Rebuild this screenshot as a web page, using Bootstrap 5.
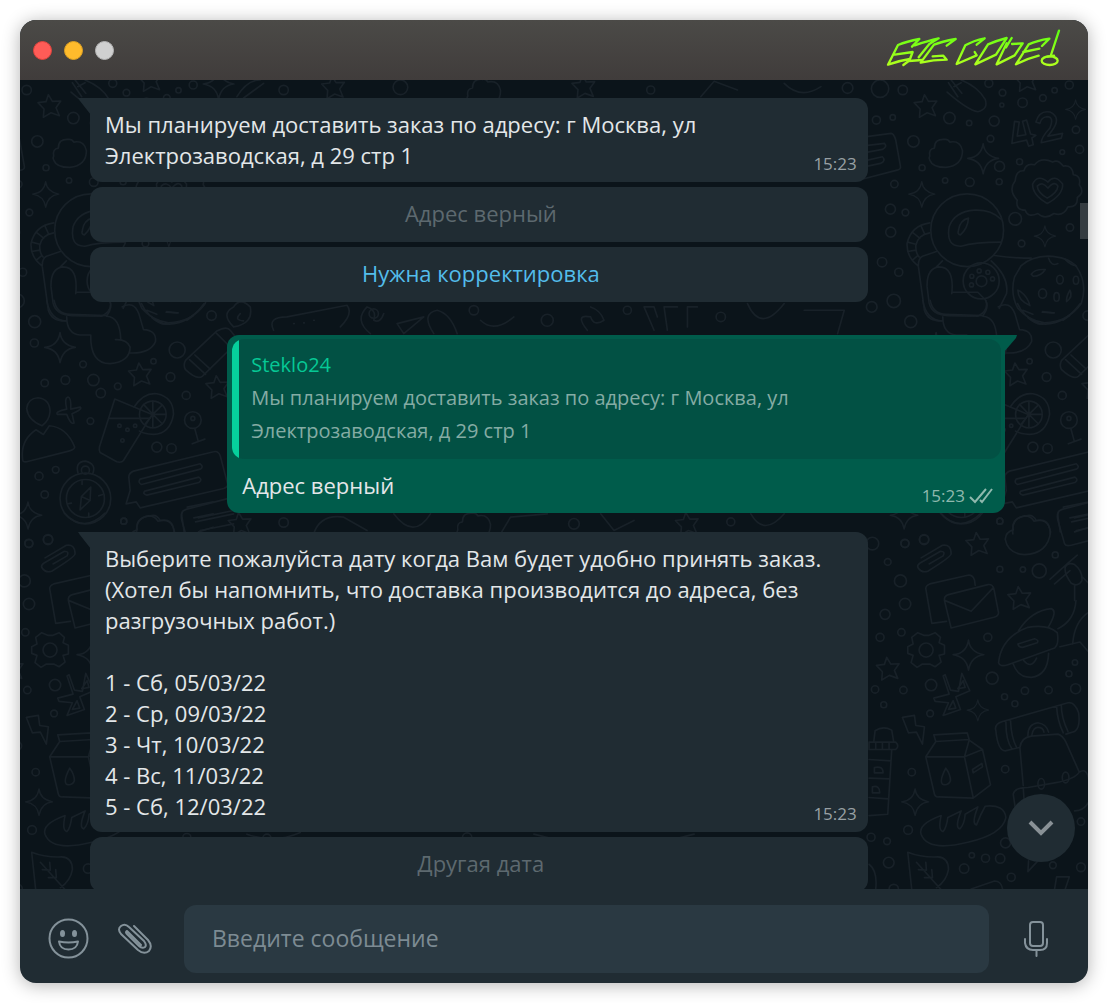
<!DOCTYPE html>
<html lang="ru">
<head>
<meta charset="utf-8">
<meta name="viewport" content="width=device-width, initial-scale=1">
<title>Steklo24</title>
<link href="https://cdn.jsdelivr.net/npm/bootstrap@5.3.0/dist/css/bootstrap.min.css" rel="stylesheet">
<style>
body{background:#fff;font-family:"Open Sans","Noto Sans",sans-serif;font-size:22px;line-height:31px;color:#e3e7e9}
.page{height:100vh;padding:20px}
.win{border-radius:16px;box-shadow:0 2px 18px rgba(0,0,0,.3);background:#202c33}
.titlebar{height:60px;padding:0 26px 0 13px;background:linear-gradient(#4b4a47,#403c3b)}
.lights{gap:12px}
.dot{width:19px;height:19px;border-radius:50%;border:1px solid}
.dot-r{background:#ff5c57;border-color:#e0443e}
.dot-y{background:#ffbb2c;border-color:#dea123}
.dot-g{background:#d0d0d0;border-color:#b5b5b5}
.chat{background:#0b141a;min-height:0}
.doodles{position:absolute;top:0;left:0;width:100%;height:100%;fill:none;stroke:#182128;stroke-width:5;stroke-linecap:round;stroke-linejoin:round}
.feed{position:relative;padding:18px 83px 0 70px}
.group{gap:5px}
.bubble{position:relative;width:85%;background:#202c33;border-radius:12px}
.bubble-in{padding:11px 15px;border-top-left-radius:0}
.bubble-long{padding-bottom:10px}
.bubble-in::before{content:"";position:absolute;top:0;left:-12px;width:13px;height:17px;background:inherit;clip-path:polygon(0 0,100% 0,100% 100%,2px 3px)}
.bubble-out{background:#005c4b;padding:4px 4px 4px 5px;margin-top:33px;margin-bottom:19px;border-top-right-radius:0}
.bubble-out::after{content:"";position:absolute;top:0;right:-12px;width:13px;height:17px;background:inherit;clip-path:polygon(0 0,100% 0,calc(100% - 1px) 3px,0 100%)}
.stamp{position:absolute;right:11px;bottom:4px;font-size:17px;line-height:28px;color:#98a0a4}
.stamp-out{color:#8fb9ae;right:12px;bottom:3px}
.reply{width:85%;height:55px;border:0;border-radius:12px;background:#202c33;color:#53bdeb;padding:0 0 2px 4px}
.reply:disabled{background:#202c33;color:#5d696f}
.quote{background:linear-gradient(90deg,#06cf9c 7px,#025144 7px);border-radius:12px;padding:9px 12px 12px 19px;font-size:20px;line-height:33px;color:#85aca4}
.quote-name{color:#06c895}
.out-text{padding:11px 10px 8px}
.to-end{position:absolute;right:13px;bottom:27px;width:68px;height:68px;border:0;border-radius:50%;background:#202c33;z-index:2}
.thumb{position:absolute;right:0;top:123px;width:8px;height:36px;background:#353c41}
.composer{height:94px;padding:5px 39px 0 28px}
.ico{border:0;background:none;padding:0;line-height:0}
.ico svg{fill:none;stroke:#84929a;stroke-width:2;stroke-linecap:round;stroke-linejoin:round}
.msg{height:68px;margin:0 30px 0 31px;border:0;border-radius:12px;background:#2a3942;color:#e3e7e9;padding:0 28px 2px;font-size:23px;min-width:0;width:100%}
.msg::placeholder{color:#7d8b93}
</style>
<script src="https://cdn.jsdelivr.net/npm/bootstrap@5.3.0/dist/js/bootstrap.bundle.min.js"></script>
</head>
<body>
<div class="page">
<div class="win h-100 d-flex flex-column overflow-hidden">
<header class="titlebar d-flex align-items-center justify-content-between flex-shrink-0">
<div class="lights d-flex"><span class="dot dot-r"></span><span class="dot dot-y"></span><span class="dot dot-g"></span></div>
<svg width="176" height="42" viewBox="78 57 528 126" role="img" aria-label="BIG CODE!" fill="none" stroke="url(#lime)" stroke-width="7" stroke-linecap="round" stroke-linejoin="round">
<defs><linearGradient id="lime" gradientUnits="userSpaceOnUse" x1="0" y1="60" x2="0" y2="170"><stop offset="0" stop-color="#5cff12"/><stop offset="1" stop-color="#b4ff1e"/></linearGradient></defs>
<path d="M178 87Q140 94 114 105L84 164Q116 152 150 147L158 126L104 134M178 87L156 110"/>
<path d="M164 106Q204 92 236 85L208 102L176 142M130 165L146 153L186 150"/>
<path d="M287 87L260 107M287 87Q244 95 222 104L182 158Q220 149 260 149L250 137L218 139"/>
<path d="M374 85L350 104M374 85Q340 92 316 106L290 162L350 136L344 126"/>
<path d="M384 103Q410 92 440 84L408 134L346 163Z"/>
<path d="M440 100L410 163L464 136L488 100L456 102M455 84L438 112"/>
<path d="M568 86L546 108M568 86Q530 92 506 103L468 163Q500 146 536 137M490 126L538 116"/>
<path d="M597 62L572 138M562 140L582 137"/><ellipse cx="569" cy="152" rx="24" ry="13"/>
</svg>
</header>
<main class="chat flex-grow-1 position-relative overflow-hidden">
<svg class="doodles" viewBox="20 80 1068 808" preserveAspectRatio="xMinYMin slice" aria-hidden="true">
<defs>
<path id="star" d="M-5-34L7-14L32-15L18 5L28 29L3 20L-20 34L-18 9L-36-10L-12-13Z"/>
<path id="spark" d="M0-44Q4-8 46 0Q8 4 0 46Q-6 6-46 0Q-6-4 0-44Z"/>
<path id="cloud" d="M-48 8Q-52-14-34-16Q-34-44-4-42Q6-44 12-34Q44-40 50-8Q50 36 0 42Q-40 42-48 20Q-52 14-48 8Z"/>
<g id="tile">
<g transform="translate(860 80) scale(.3333)">
<circle cx="57" cy="26" r="26"/><circle cx="125" cy="30" r="14"/><circle cx="383" cy="10" r="12"/><circle cx="424" cy="38" r="10"/><circle cx="484" cy="68" r="14"/><circle cx="545" cy="54" r="10"/><circle cx="580" cy="31" r="8"/><circle cx="624" cy="15" r="12"/><circle cx="422" cy="75" r="6"/>
<use href="#star" x="195" y="78"/><use href="#star" x="495" y="0"/>
<path d="M262 8L290 50M270 0L302 40M258 36Q320 90 350 95Q382 88 372 58Q350 20 300 0M278 20L300 8"/>
<circle cx="265" cy="114" r="17"/><circle cx="324" cy="129" r="8"/><circle cx="399" cy="123" r="15"/><circle cx="46" cy="120" r="12"/><circle cx="95" cy="112" r="8"/><circle cx="157" cy="184" r="17"/><circle cx="388" cy="176" r="10"/>
<use href="#cloud" x="254" y="220"/><use href="#spark" x="366" y="235"/><circle cx="415" cy="259" r="15"/><circle cx="475" cy="245" r="9"/><circle cx="644" cy="149" r="11"/><circle cx="655" cy="208" r="12"/><circle cx="603" cy="216" r="7"/>
<use href="#spark" transform="translate(643 88) scale(.65)"/>
<path d="M460 124L452 190L496 180L502 198L516 194L512 174L524 166L508 162L496 120L484 124L494 164L468 168L474 126ZM524 126Q534 90 566 96Q602 112 572 152L560 168L604 160L600 174L540 188Q540 172 566 144Q580 110 556 110Q540 112 536 130Z"/>
<path d="M0 172L90 160Q98 160 104 180L118 258Q120 268 108 270L0 298M20 196L70 190Q80 200 64 208L20 216M20 240L64 230Q76 242 58 250L20 258"/>
<path d="M462 302Q464 270 488 272Q494 248 520 254Q540 230 574 246Q590 236 606 258Q634 254 636 284Q660 286 654 314Q672 338 648 352Q650 382 620 380Q606 410 578 400Q550 420 530 400Q500 414 492 390Q462 390 468 360Q440 330 462 302Z"/><path d="M560 306Q580 280 604 312Q606 344 558 370Q514 346 514 312Q530 280 560 306ZM560 324Q580 300 590 318Q588 338 558 354Q530 338 528 318Q544 302 560 324Z"/>
<circle cx="462" cy="416" r="19"/><use href="#spark" transform="translate(551 468) scale(.7)"/><circle cx="626" cy="442" r="11"/><circle cx="481" cy="490" r="10"/>
<use href="#spark" transform="translate(182 342) scale(.85)"/><circle cx="326" cy="306" r="13"/><circle cx="252" cy="301" r="8"/><circle cx="183" cy="263" r="9"/><circle cx="414" cy="305" r="9"/><circle cx="100" cy="312" r="11"/><circle cx="88" cy="387" r="15"/><circle cx="133" cy="397" r="10"/><circle cx="89" cy="456" r="15"/><circle cx="63" cy="546" r="14"/><circle cx="113" cy="576" r="12"/><circle cx="98" cy="662" r="20"/><circle cx="32" cy="680" r="16"/>
<circle cx="318" cy="450" r="109"/><path d="M418 416Q390 388 340 390Q280 394 264 440Q254 500 300 498Q340 486 420 486M292 450Q296 420 322 414Q320 444 298 464Q288 464 292 450ZM206 428Q150 436 138 490Q136 530 170 556M206 458Q170 464 164 496Q164 520 174 530M180 438L190 460M156 458L176 474M140 486L164 492M140 514L164 510M154 540L170 526M226 514L184 528Q170 536 172 560L190 690Q200 724 244 722M244 542L226 560M272 640Q280 560 234 560Q196 564 198 620L204 668Q212 704 260 706L350 708Q384 690 374 660L350 636L272 636M390 542Q444 590 436 640L414 684M400 526Q460 534 510 534"/>
<circle cx="360" cy="602" r="54"/><circle cx="361" cy="603" r="16"/><circle cx="354" cy="572" r="6"/><circle cx="380" cy="576" r="6"/><circle cx="394" cy="596" r="6"/><circle cx="332" cy="588" r="6"/><circle cx="331" cy="614" r="6"/>
<path d="M480 556Q510 530 560 528Q620 530 646 560Q680 610 660 670Q620 726 550 728Q500 720 470 684Q446 640 460 590Z"/><path d="M510 582Q520 566 552 568Q540 588 516 588ZM470 630Q470 660 506 676Q500 650 478 634ZM562 534Q570 560 590 550M610 536Q630 556 644 556M500 712Q530 738 550 730M626 630Q636 650 616 664Q614 650 626 630ZM544 694L576 698"/><ellipse cx="544" cy="640" rx="12" ry="14"/><ellipse cx="596" cy="598" rx="10" ry="13"/><ellipse cx="644" cy="600" rx="8" ry="12"/><ellipse cx="586" cy="650" rx="8" ry="13"/>
</g>
<g transform="translate(875 300) scale(.3333)">
<path d="M140 0Q150 60 200 62M162 0Q170 42 210 42L320 46Q340 20 328 0M200 50Q200 100 240 104L272 104M320 48Q360 50 362 118M272 104Q270 190 330 190Q390 184 390 140Q380 116 346 118M366 20Q400 0 416 40L430 88Q470 90 466 124Q450 160 390 158"/>
<path d="M424 10Q440 50 490 70Q560 80 612 10M440 30L470 42M498 36L534 38M560 60L580 46"/>
<circle cx="104" cy="64" r="18"/><circle cx="103" cy="128" r="12"/><circle cx="249" cy="192" r="10"/><use href="#spark" x="180" y="141"/><circle cx="134" cy="248" r="11"/><circle cx="196" cy="239" r="13"/><circle cx="280" cy="239" r="17"/><circle cx="302" cy="278" r="14"/><circle cx="353" cy="258" r="10"/><circle cx="271" cy="362" r="10"/><circle cx="531" cy="149" r="24"/><circle cx="634" cy="46" r="14"/><circle cx="460" cy="183" r="8"/><circle cx="511" cy="230" r="13"/><circle cx="558" cy="285" r="12"/>
<use href="#star" x="421" y="222"/><use href="#star" x="653" y="260"/>
<path d="M556 180L650 92Q680 76 690 90L706 110Q714 130 690 146L606 228Q590 240 556 208Q548 196 556 180ZM568 178L616 222M584 164L630 206M646 96L690 140"/>
<path d="M114 292Q150 296 150 334Q148 360 126 376Q84 360 80 324Q84 294 114 292ZM68 478Q60 420 108 388L130 402L148 376Q200 380 224 440Q224 448 206 452L80 484Q68 486 68 478Z"/>
<path d="M204 290Q214 292 212 326L240 320Q250 326 216 340L222 368Q212 374 200 342L172 342Q164 334 200 326Q192 292 204 290Z"/>
<path d="M344 296L456 342L370 480Q364 488 350 484L300 456Q296 450 298 440ZM328 354H450"/><circle cx="458" cy="342" r="40"/><path d="M402 320Q430 276 470 280Q520 290 520 342Q510 400 460 402Q430 400 418 392M458 342L458 302M458 342L486 314M458 342H498M458 342L486 370M458 342V382M458 342L434 372M458 342L430 312"/><circle cx="358" cy="376" r="5"/><circle cx="382" cy="388" r="5"/><circle cx="405" cy="376" r="5"/><circle cx="367" cy="420" r="5"/>
<circle cx="578" cy="359" r="25"/><circle cx="578" cy="354" r="6"/><path d="M584 386L594 422M576 430L614 416"/><circle cx="470" cy="440" r="15"/><circle cx="514" cy="444" r="14"/>
<circle cx="256" cy="594" r="76"/><circle cx="256" cy="594" r="57"/><circle cx="256" cy="509" r="12"/><path d="M234 518Q224 484 256 482Q290 490 278 520M272 560L270 600L240 628L244 588ZM244 588L270 600M246 540V552M266 638V650M202 610L214 608M296 586L308 582"/>
<path d="M386 530Q386 518 400 512L640 454Q654 450 660 466L682 550Q684 560 670 564L420 622L408 604L378 610L390 570ZM420 536L600 490Q612 500 600 506L424 552Q412 546 420 536ZM434 572L596 530Q608 538 596 546L440 584Q426 580 434 572ZM552 694L544 640Q546 630 560 626L700 590M594 652L700 630M586 664L700 640M600 690L700 670"/>
<path d="M410 700Q404 650 450 646Q470 640 480 660Q520 650 522 700"/>
<circle cx="117" cy="527" r="12"/><circle cx="167" cy="508" r="10"/><circle cx="134" cy="582" r="11"/><circle cx="371" cy="662" r="9"/><use href="#spark" transform="translate(84 644) scale(.9)"/><circle cx="86" cy="728" r="12"/><circle cx="144" cy="716" r="14"/>
</g>
<g transform="translate(860 340) scale(.3333)">
<path d="M432 596Q434 574 456 568Q450 534 490 526Q510 526 518 542Q560 530 568 574Q560 640 490 642Q440 640 432 596Z"/>
<path d="M238 518Q296 580 360 518"/><circle cx="416" cy="542" r="9"/><circle cx="34" cy="609" r="19"/><circle cx="189" cy="598" r="14"/><circle cx="132" cy="609" r="12"/><use href="#star" x="350" y="610"/>
<path d="M180 652L244 614Q270 610 270 640Q268 650 200 692Q180 698 170 680Q168 674 176 668L238 632Q254 632 246 646L204 670"/>
<circle cx="80" cy="664" r="10"/><circle cx="118" cy="721" r="18"/><circle cx="416" cy="686" r="9"/><circle cx="485" cy="687" r="8"/><circle cx="534" cy="691" r="21"/><circle cx="582" cy="643" r="9"/><use href="#star" x="476" y="772"/>
<path d="M212 848L194 744Q194 734 206 730L320 704Q334 702 340 718L342 734M212 848L256 842M250 780Q248 766 262 762L380 732Q394 730 398 744L412 816Q412 826 398 830L270 862ZM252 780L330 812L396 742"/>
<path d="M606 500L684 484M592 514Q586 524 590 540L610 610Q614 618 630 614L684 600M626 532L684 520M640 574L684 560M566 716L620 668L648 644M580 730L626 690M612 680Q620 664 640 672Q664 690 662 720Q650 740 630 728Q608 700 612 680M640 734V780M664 710L684 730"/>
</g>
<g transform="translate(860 600) scale(.3333)">
<circle cx="72" cy="41" r="15"/><circle cx="132" cy="10" r="17"/><circle cx="57" cy="110" r="12"/><circle cx="121" cy="95" r="11"/><circle cx="380" cy="110" r="12"/><circle cx="210" cy="253" r="17"/><circle cx="393" cy="232" r="18"/><circle cx="42" cy="266" r="11"/><circle cx="127" cy="268" r="11"/><circle cx="68" cy="312" r="9"/><circle cx="207" cy="338" r="10"/>
<circle cx="195" cy="148" r="21"/><path d="M170 96L188 104L204 104L222 96L238 110L234 126L250 134V160L234 164L240 184L222 198L206 190H184L168 200L150 186L156 164L140 158V138L156 130L152 110Z"/>
<use href="#star" x="82" y="204"/><use href="#spark" x="322" y="162"/><use href="#spark" transform="translate(350 328) scale(.7)"/>
<path d="M252 222L268 268L292 272L302 218L326 270L284 288L298 326L246 344L262 306L222 302L218 292L264 280L246 226ZM290 264L306 240L312 260ZM262 326L276 300L284 322Z"/>
<path d="M124 350L160 344L164 374L190 378L184 430L166 394L142 396Z"/>
<path d="M412 186Q420 110 500 80Q560 70 588 96Q594 130 580 142L440 192Q416 200 412 186ZM472 90Q510 30 570 24Q590 30 562 78M470 130L520 114Q534 118 528 126L484 140Q472 140 470 130ZM456 190Q470 230 510 230Q560 224 562 158M488 180Q510 206 526 172M590 84Q640 60 644 0M596 138L656 124M634 130Q640 60 684 34M656 124L684 156"/>
<circle cx="641" cy="185" r="8"/><circle cx="623" cy="219" r="9"/><circle cx="643" cy="264" r="15"/><circle cx="491" cy="270" r="11"/><circle cx="562" cy="268" r="11"/><circle cx="430" cy="288" r="9"/><circle cx="461" cy="309" r="9"/>
<path d="M404 390Q398 370 424 362L620 306Q640 302 652 336Q658 380 640 392L614 400M404 390Q410 450 432 450L474 440M434 364Q434 420 452 444M448 360Q450 410 466 440M586 316Q588 360 606 396M600 312Q600 350 620 392M500 404Q500 370 530 366Q556 370 562 394M512 402Q516 380 530 380Q546 380 548 394M486 554L476 440Q480 410 510 406L590 400Q604 404 614 424L654 514Q640 536 580 546L500 560Q460 560 456 580L462 620M486 560L490 620M654 514Q690 490 684 600Q670 630 640 630"/><ellipse cx="540" cy="549" rx="10" ry="16"/><ellipse cx="613" cy="530" rx="10" ry="16"/>
<path d="M224 422L218 402L318 396L324 416ZM224 422L194 468L220 580Q222 590 234 588L336 592L388 552L364 446L324 418L310 468H194M310 468L336 590M310 468L364 446M254 502Q268 520 268 540Q260 556 244 550Q234 540 254 502ZM334 506L362 488L364 498L336 516Z"/>
<path d="M38 424L42 390Q66 374 92 388L98 424M24 424H104Q116 436 104 446H24ZM44 424V446M64 424V446M84 424V446M92 446L80 640L24 644M24 476L90 480M24 532L86 534M24 590L82 594M40 500Q66 494 66 516H40ZM34 558Q56 552 56 576H34Z"/>
<circle cx="152" cy="514" r="11"/><circle cx="432" cy="505" r="11"/><use href="#spark" transform="translate(162 603) scale(.88)"/>
<path d="M180 700Q170 670 240 644Q230 690 246 692Q256 680 260 650L300 630Q280 680 296 684Q310 670 312 640L350 618Q330 670 346 672Q358 640 372 616Q430 610 434 650Q424 700 320 724Q200 754 180 700Z"/>
<circle cx="141" cy="687" r="13"/><circle cx="30" cy="709" r="12"/><circle cx="78" cy="721" r="10"/><circle cx="83" cy="785" r="16"/><circle cx="309" cy="803" r="14"/><circle cx="332" cy="763" r="8"/><circle cx="373" cy="772" r="12"/><circle cx="417" cy="773" r="14"/><circle cx="433" cy="726" r="15"/><circle cx="450" cy="829" r="12"/><circle cx="575" cy="793" r="10"/><circle cx="659" cy="799" r="13"/><circle cx="659" cy="662" r="11"/><circle cx="98" cy="864" r="14"/>
<path d="M152 866L140 754Q180 770 230 768Q262 770 262 806Q256 840 226 860M166 784L240 866M172 806L196 808L194 784M190 830L214 830L212 806M330 864L400 840Q420 840 424 864M502 780L500 812L530 780M580 864L586 828H624L612 864M24 790Q50 810 44 864"/>
</g>
</g>
</defs>
<use href="#tile"/><use href="#tile" x="-875"/>
<g transform="scale(.3333)">
<use href="#spark" x="655" y="252"/><use href="#star" x="1000" y="262"/><circle cx="850" cy="270" r="14"/><circle cx="1200" cy="262" r="22"/><use href="#cloud" x="1450" y="280"/><use href="#star" x="1750" y="260"/><circle cx="1950" cy="270" r="12"/><path d="M710 290Q740 240 780 240M730 294L790 250M2100 290L2140 244L2210 270M2350 250Q2400 300 2460 260"/><circle cx="2540" cy="264" r="16"/>
<path d="M700 920Q720 890 750 920Q760 970 700 980Q660 940 700 920M820 990Q800 950 860 950L1040 915Q1060 940 1020 980M880 970H882M910 968H912M940 960H942M720 940Q700 960 730 962M1110 1000Q1060 960 1100 920Q1130 930 1120 960Q1140 970 1150 940M1190 970L1270 950L1210 1000ZM1300 1000Q1260 940 1310 930Q1350 940 1370 1000M1440 960Q1480 1000 1540 950M1760 990Q1720 940 1770 950Q1780 980 1810 960Q1800 930 1770 920M1960 990L1930 920H1960L1970 950M2000 990L1990 920H2030M2060 980V920H2090M2240 910Q2280 1000 2350 910M2410 930H2530L2510 1000"/><circle cx="1120" cy="940" r="14"/><circle cx="1420" cy="930" r="14"/><circle cx="1640" cy="960" r="18"/><circle cx="2160" cy="950" r="14"/><circle cx="1880" cy="930" r="12"/>
<use href="#star" x="720" y="1570"/><circle cx="850" cy="1566" r="14"/><path d="M940 1600Q960 1540 1030 1550L1100 1590M1180 1540Q1240 1620 1290 1540M1500 1600L1530 1550L1640 1540M1800 1540L1840 1590L1900 1560M2250 1540Q2290 1610 2350 1540"/><use href="#cloud" x="1420" y="1580"/><use href="#star" x="2060" y="1570"/><circle cx="2190" cy="1564" r="12"/><circle cx="1720" cy="1570" r="16"/>
<circle cx="560" cy="2510" r="12"/><circle cx="800" cy="2512" r="12"/><circle cx="1400" cy="2510" r="14"/><path d="M740 2500Q820 2530 900 2495M1600 2500L1680 2520M2000 2520L2080 2500"/>
</g>
</svg>
<div class="feed d-flex flex-column">
<section class="group d-flex flex-column">
<div class="bubble bubble-in">Мы планируем доставить заказ по адресу: г Москва, ул<br>Электрозаводская, д 29 стр 1<time class="stamp">15:23</time></div>
<button class="reply" type="button" disabled>Адрес верный</button>
<button class="reply" type="button">Нужна корректировка</button>
</section>
<section class="bubble bubble-out align-self-end">
<div class="quote"><div class="quote-name">Steklo24</div>Мы планируем доставить заказ по адресу: г Москва, ул<br>Электрозаводская, д 29 стр 1</div>
<div class="out-text">Адрес верный</div>
<div class="stamp stamp-out d-flex align-items-center gap-1"><time>15:23</time><svg width="24" height="16" viewBox="0 0 24 16" fill="none" stroke="currentColor" stroke-width="2" aria-label="Доставлено" role="img"><path d="M1 9L6 14L17 1M11 12L13 14L23 1"/></svg></div>
</section>
<section class="group d-flex flex-column">
<div class="bubble bubble-in bubble-long">Выберите пожалуйста дату когда Вам будет удобно принять заказ.<br>(Хотел бы напомнить, что доставка производится до адреса, без<br>разгрузочных работ.)<br><br>1 - Сб, 05/03/22<br>2 - Ср, 09/03/22<br>3 - Чт, 10/03/22<br>4 - Вс, 11/03/22<br>5 - Сб, 12/03/22<time class="stamp">15:23</time></div>
<button class="reply" type="button" disabled>Другая дата</button>
</section>
</div>
<div class="thumb"></div>
<button class="to-end d-flex align-items-center justify-content-center" type="button" aria-label="Вниз"><svg width="26" height="18" viewBox="0 0 26 18" fill="none" stroke="#899196" stroke-width="4"><path d="M2 3L13 14L24 3"/></svg></button>
</main>
<footer class="composer d-flex align-items-center flex-shrink-0">
<button class="ico" type="button" aria-label="Смайлики"><svg width="41" height="41" viewBox="0 0 41 41"><circle cx="20.500" cy="20.500" r="19"/><g fill="#84929a" stroke="none"><ellipse cx="14.500" cy="15.500" rx="2.500" ry="3.500"/><ellipse cx="26.500" cy="15.500" rx="2.500" ry="3.500"/></g><path d="M11 23.500Q20.500 25.500 30 23.500Q29 31.500 20.500 31.500Q12 31.500 11 23.500Z"/></svg></button>
<button class="ico ms-4" type="button" aria-label="Прикрепить"><svg class="ms-1" width="36" height="32" viewBox="0 0 36 32"><path d="M17 3L31 17Q36 23 32 28Q27 32 21 27L4 11Q0 6 4 3Q8 0 12 4L27 18Q30 22 28 24Q25 26 22 23L10 11M10 11Q8 9 10 8L24 22"/></svg></button>
<input class="msg flex-grow-1" type="text" placeholder="Введите сообщение" aria-label="Введите сообщение">
<button class="ico ms-1" type="button" aria-label="Голосовое сообщение"><svg width="26" height="38" viewBox="0 0 26 38"><rect x="7" y="2" width="13" height="24" rx="3"/><path d="M2 19V23Q3 30 10 30H17Q24 30 24 23V19M13.500 30V36"/></svg></button>
</footer>
</div>
</div>
</body>
</html>
